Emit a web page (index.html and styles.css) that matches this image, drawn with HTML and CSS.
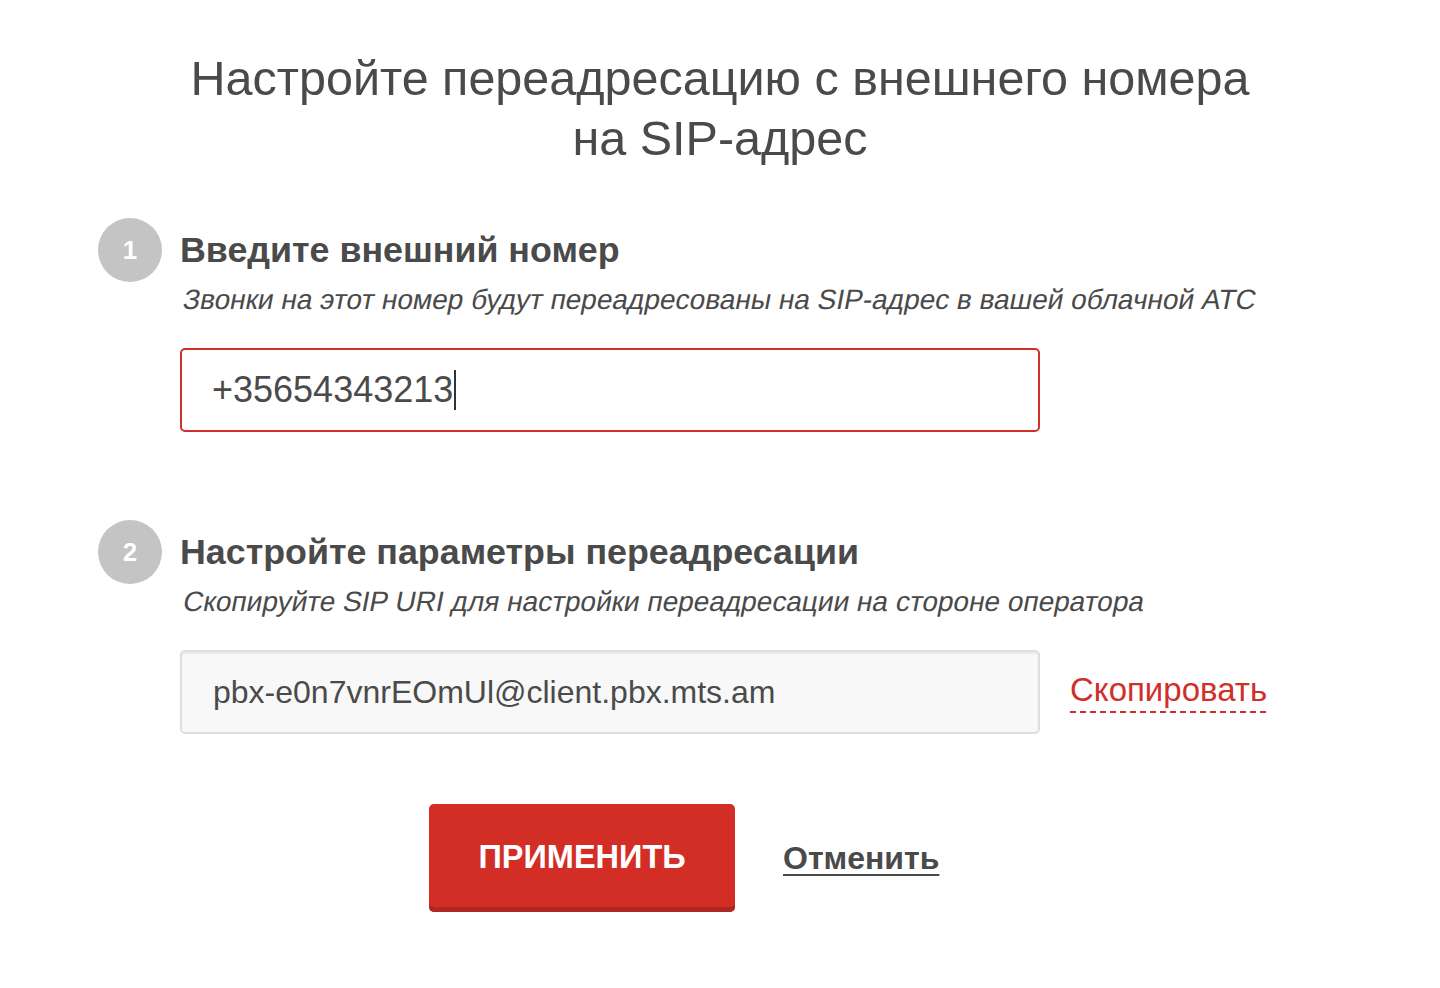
FILE: index.html
```html
<!DOCTYPE html>
<html lang="ru">
<head>
<meta charset="utf-8">
<title>Переадресация</title>
<link rel="stylesheet" href="styles.css">
</head>
<body>
<main class="page">
  <h1 class="title">Настройте переадресацию с внешнего номера<br>на SIP-адрес</h1>

  <section class="step step-1">
    <div class="badge">1</div>
    <div class="step-body">
      <h2 class="step-title">Введите внешний номер</h2>
      <p class="step-hint"><span class="slant">Звонки на этот номер будут переадресованы на SIP-адрес в вашей облачной АТС</span></p>
      <div class="field field-active"><span class="field-text">+35654343213</span><span class="caret"></span></div>
    </div>
  </section>

  <section class="step step-2">
    <div class="badge">2</div>
    <div class="step-body">
      <h2 class="step-title">Настройте параметры переадресации</h2>
      <p class="step-hint"><span class="slant">Скопируйте SIP URI для настройки переадресации на стороне оператора</span></p>
      <div class="field-row">
        <div class="field field-readonly"><span class="field-text">pbx-e0n7vnrEOmUl@client.pbx.mts.am</span></div>
        <a class="copy-link" href="#">Скопировать</a>
      </div>
    </div>
  </section>

  <div class="actions">
    <button class="btn-apply" type="button">ПРИМЕНИТЬ</button>
    <a class="cancel-link" href="#">Отменить</a>
  </div>
</main>
</body>
</html>
```

FILE: styles.css
```css
* { box-sizing: border-box; }
html, body { margin: 0; padding: 0; background: #fff; }
body {
  font-family: "Liberation Sans", Arial, Helvetica, sans-serif;
  color: #4a4a4a;
}
.page {
  width: 1440px;
  padding-top: 48px;
}
.title {
  margin: 0;
  text-align: center;
  font-weight: 400;
  font-size: 48.5px;
  line-height: 60px;
  color: #4a4a4a;
}
.step {
  display: flex;
  align-items: flex-start;
  padding-left: 98px;
  gap: 18px;
}
.step-1 { margin-top: 50px; }
.step-2 { margin-top: 88px; }
.badge {
  width: 64px;
  height: 64px;
  border-radius: 50%;
  background: #c4c4c4;
  color: #fff;
  font-weight: 700;
  font-size: 26px;
  display: flex;
  align-items: center;
  justify-content: center;
  flex: none;
}
.step-body { display: flex; flex-direction: column; }
.step-title {
  margin: 0;
  font-size: 35.8px;
  font-weight: 700;
  line-height: 64px;
  color: #4a4a4a;
}
.step-hint {
  margin: 0;
  font-size: 28px;
  line-height: 36px;
  color: #4a4a4a;
}
.slant {
  display: inline-block;
  transform: skewX(-11deg);
  transform-origin: left bottom;
}
.field {
  width: 860px;
  height: 84px;
  margin-top: 30px;
  border-radius: 5px;
  display: flex;
  align-items: center;
  padding-left: 30px;
  color: #4a4a4a;
}
.field-active {
  border: 2px solid #d0302a;
  background: #fff;
  font-size: 36px;
}
.caret {
  display: inline-block;
  width: 2px;
  height: 40px;
  background: #333;
  margin-left: 1px;
}
.field-readonly {
  border: 2px solid #dedede;
  background: #f8f8f8;
  box-shadow: inset 0 2px 2px rgba(0,0,0,0.06);
  font-size: 32px;
  padding-left: 31px;
}
.field-row {
  display: flex;
  align-items: flex-end;
  gap: 30px;
}
.copy-link {
  color: #d0302a;
  font-size: 33px;
  text-decoration: none;
  line-height: 38px;
  padding-bottom: 4px;
  margin-bottom: 21px;
  background-image: repeating-linear-gradient(to right, #d0302a 0 6px, transparent 6px 10px);
  background-size: 100% 2px;
  background-repeat: no-repeat;
  background-position: left bottom;
}
.actions {
  display: flex;
  align-items: center;
  padding-left: 429px;
  margin-top: 70px;
  gap: 48px;
}
.btn-apply {
  width: 306px;
  height: 108px;
  border: none;
  border-radius: 5px;
  background: #d22e26;
  box-shadow: inset 0 -5px 0 #b02621;
  color: #fff;
  font-family: "Liberation Sans", Arial, sans-serif;
  font-weight: 700;
  font-size: 32.5px;
  padding: 0 0 2px;
}
.cancel-link {
  color: #4a4a4a;
  font-size: 32px;
  font-weight: 700;
  text-decoration: underline;
  text-underline-offset: 5px;
  text-decoration-thickness: 2px;
}
```
